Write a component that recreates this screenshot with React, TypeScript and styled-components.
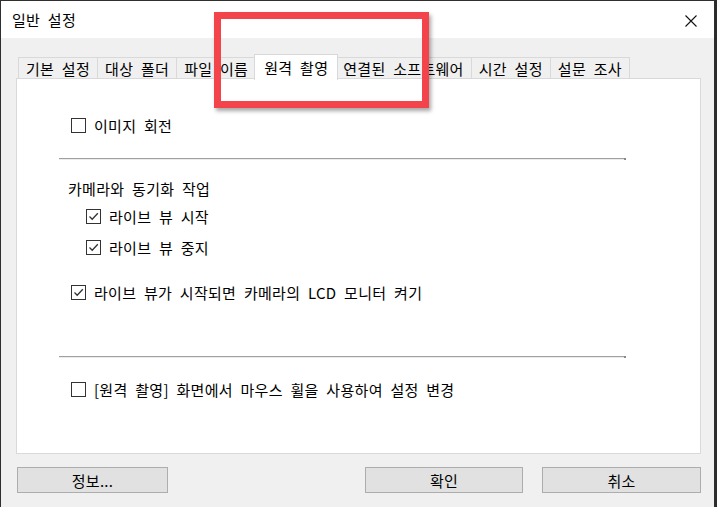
import React from "react";
import styled, { createGlobalStyle } from "styled-components";

const GlobalStyle = createGlobalStyle`
  html, body { margin: 0; padding: 0; background: #2b2b2b; }
  body {
    font-family: "Noto Sans CJK KR", "Noto Sans", sans-serif;
    font-size: 15px;
    letter-spacing: 0.3px;
    word-spacing: 4px;
    color: #000;
  }
`;

const Window = styled.div`
  position: relative;
  width: 713px;
  height: 506px;
  border: 1px solid #2f2f2f;
  border-bottom: none;
  background: #f0f0f0;
  display: flex;
  flex-direction: column;
  overflow: hidden;
`;

const TitleBar = styled.div`
  height: 37px;
  background: #fff;
  display: flex;
  align-items: center;
  justify-content: space-between;
  padding: 0 16px 0 11px;
  flex-shrink: 0;
`;

const Title = styled.div`
  font-size: 15px;
  line-height: 1;
  margin-top: -1px;
`;

const CloseBtn = styled.div`
  width: 14px;
  height: 14px;
  display: flex;
  margin-top: 3px;
`;

const Body = styled.div`
  flex: 1;
  display: flex;
  flex-direction: column;
  padding: 16px 13px 0 15px;
`;

const TabStrip = styled.div`
  display: flex;
  align-items: flex-end;
  height: 25px;
  padding-left: 2px;
  position: relative;
  z-index: 1;
`;

const Tab = styled.div<{ $active?: boolean }>`
  height: ${({ $active }) => ($active ? "26px" : "22px")};
  padding: ${({ $active }) => ($active ? "0 9px" : "0 7px")};
  margin: ${({ $active }) => ($active ? "0 -2px -1px" : "0")};
  background: ${({ $active }) => ($active ? "#fff" : "#f0f0f0")};
  border: 1px solid #d9d9d9;
  border-bottom: ${({ $active }) => ($active ? "none" : "1px solid #d9d9d9")};
  border-left-width: ${({ $active }) => ($active ? "1px" : "0")};
  box-sizing: border-box;
  display: flex;
  align-items: center;
  font-size: 15px;
  white-space: nowrap;
  position: relative;
  z-index: ${({ $active }) => ($active ? 2 : 1)};
  &:first-child { border-left-width: 1px; }
`;

const Panel = styled.div`
  height: 376px;
  background: #fff;
  border: 1px solid #d9d9d9;
  box-sizing: border-box;
  padding: 36px 75px 0 42px;
  margin-top: -1px;
  display: flex;
  flex-direction: column;
`;

const Row = styled.div<{ $top: number; $indent: number }>`
  height: 20px;
  margin-top: ${({ $top }) => $top}px;
  padding-left: ${({ $indent }) => $indent}px;
  display: flex;
  align-items: center;
  gap: 8px;
  white-space: nowrap;
`;

const Box = styled.span`
  width: 15px;
  height: 15px;
  box-sizing: border-box;
  border: 1px solid #333;
  background: #fff;
  display: inline-flex;
  flex-shrink: 0;
`;

const Separator = styled.div<{ $top: number }>`
  margin-top: ${({ $top }) => $top}px;
  height: 1px;
  background: #a0a0a0;
  border-bottom: 1px solid #ececec;
  position: relative;
  &::after {
    content: "";
    position: absolute;
    right: -1px;
    top: 0;
    width: 2px;
    height: 2px;
    background: #8a8a8a;
  }
`;

const ButtonRow = styled.div`
  display: flex;
  align-items: center;
  margin-top: 13px;
  padding-left: 1px;
`;

const Spacer = styled.div`
  flex: 1;
`;

const Button = styled.div<{ $w: number }>`
  width: ${({ $w }) => $w}px;
  height: 26px;
  box-sizing: border-box;
  background: #e1e1e1;
  border: 1px solid #adadad;
  display: flex;
  align-items: center;
  justify-content: center;
  font-size: 15px;
  & + & { margin-left: 19px; }
`;

const Highlight = styled.div`
  position: absolute;
  left: 213px;
  top: 11px;
  width: 215px;
  height: 96px;
  box-sizing: border-box;
  border: 7px solid #f2444a;
  box-shadow: 2px 3px 4px rgba(0, 0, 0, 0.35);
  z-index: 10;
  pointer-events: none;
`;

const Check = ({ checked }: { checked?: boolean }) => (
  <Box>
    {checked && (
      <svg width="13" height="13" viewBox="0 0 13 13">
        <path d="M2.5 6.5 L5.2 9.2 L10.8 3.2" fill="none" stroke="#333" strokeWidth="1.3" />
      </svg>
    )}
  </Box>
);

const tabs = ["기본 설정", "대상 폴더", "파일 이름", "원격 촬영", "연결된 소프트웨어", "시간 설정", "설문 조사"];

export default function App() {
  return (
    <>
      <GlobalStyle />
      <Window>
        <TitleBar>
          <Title>일반 설정</Title>
          <CloseBtn>
            <svg width="14" height="14" viewBox="0 0 14 14">
              <path d="M1.5 1.5 L12.5 12.5 M12.5 1.5 L1.5 12.5" stroke="#111" strokeWidth="1.1" />
            </svg>
          </CloseBtn>
        </TitleBar>
        <Body>
          <TabStrip>
            {tabs.map((t) => (
              <Tab key={t} $active={t === "원격 촬영"}>{t}</Tab>
            ))}
          </TabStrip>
          <Panel>
            <Row $top={0} $indent={12}>
              <Check />
              <span>이미지 회전</span>
            </Row>
            <Separator $top={23} />
            <Row $top={18} $indent={9}>
              <span>카메라와 동기화 작업</span>
            </Row>
            <Row $top={8} $indent={27}>
              <Check checked />
              <span>라이브 뷰 시작</span>
            </Row>
            <Row $top={11} $indent={27}>
              <Check checked />
              <span>라이브 뷰 중지</span>
            </Row>
            <Row $top={25} $indent={12}>
              <Check checked />
              <span>라이브 뷰가 시작되면 카메라의 LCD 모니터 켜기</span>
            </Row>
            <Separator $top={54} />
            <Row $top={21} $indent={12}>
              <Check />
              <span>[원격 촬영] 화면에서 마우스 휠을 사용하여 설정 변경</span>
            </Row>
          </Panel>
          <ButtonRow>
            <Button $w={151}>정보...</Button>
            <Spacer />
            <Button $w={158}>확인</Button>
            <Button $w={159}>취소</Button>
          </ButtonRow>
        </Body>
        <Highlight />
      </Window>
    </>
  );
}
